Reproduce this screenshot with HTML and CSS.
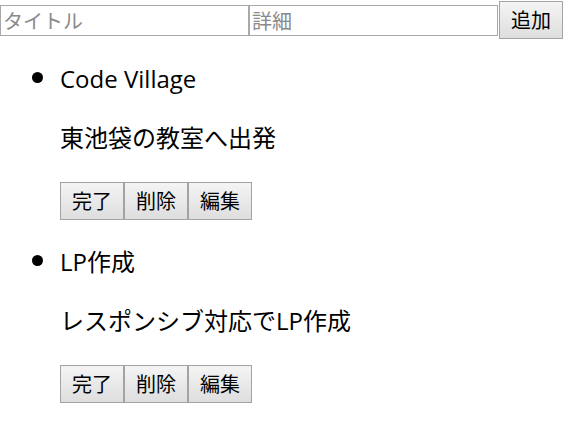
FILE: index.html
```html
<!DOCTYPE html>
<html lang="ja">
<head>
<meta charset="utf-8">
<title>Todo</title>
<link rel="stylesheet" href="styles.css">
</head>
<body>
<div class="form">
  <input class="field" type="text" placeholder="タイトル">
  <input class="field" type="text" placeholder="詳細">
  <button class="btn btn-add">追加</button>
</div>
<ul class="todo-list">
  <li class="todo">
    <div class="todo-title">Code Village</div>
    <p class="todo-detail">東池袋の教室へ出発</p>
    <div class="todo-actions"><button class="btn">完了</button><button class="btn">削除</button><button class="btn">編集</button></div>
  </li>
  <li class="todo">
    <div class="todo-title">LP作成</div>
    <p class="todo-detail">レスポンシブ対応でLP作成</p>
    <div class="todo-actions"><button class="btn">完了</button><button class="btn">削除</button><button class="btn">編集</button></div>
  </li>
</ul>
</body>
</html>
```

FILE: styles.css
```css
body {
  margin: 0;
  font-family: "Open Sans", "Noto Sans CJK JP", sans-serif;
  color: #000;
  background: #fff;
}

.form {
  display: flex;
  align-items: center;
  height: 40px;
}

.field {
  box-sizing: border-box;
  width: 249px;
  height: 31px;
  margin: 0;
  padding: 0 2px;
  border: 1px solid #a9a9a9;
  font-family: "Noto Sans CJK JP", sans-serif;
  font-size: 20px;
  color: #000;
  outline: none;
}

.field::placeholder {
  color: #8a8a8a;
}

.btn {
  box-sizing: border-box;
  width: 64px;
  height: 38px;
  margin: 0;
  padding: 0;
  border: 1px solid #a3a3a3;
  border-radius: 0;
  background: linear-gradient(#f4f4f4, #dedede);
  font-family: "Noto Sans CJK JP", sans-serif;
  font-size: 20px;
  line-height: 1;
  color: #000;
}

.btn-add {
  margin-left: 1px;
}

.todo-list {
  margin: 21px 0 0;
  padding-left: 60px;
  font-size: 24px;
  line-height: 32px;
}

.todo + .todo {
  margin-top: 24px;
}

.todo::marker {
  font-size: 30px;
}

.todo-title {
  line-height: 36px;
}

.todo-detail {
  margin: 25px 0 0;
}

.todo-actions {
  display: flex;
  margin-top: 28px;
}
```
